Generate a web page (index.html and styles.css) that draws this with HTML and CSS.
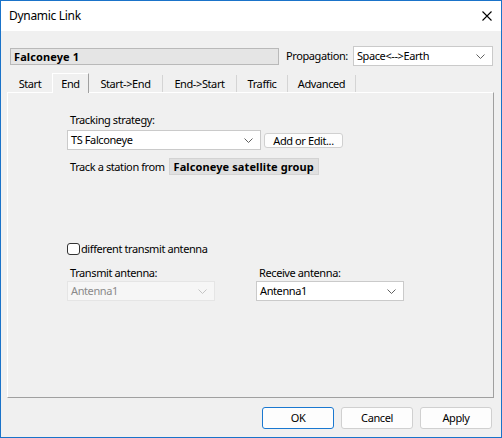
FILE: index.html
```html
<!DOCTYPE html>
<html>
<head>
<meta charset="utf-8">
<link rel="stylesheet" href="styles.css">
</head>
<body>
<div class="window">
  <div class="titlebar">
    <span class="title">Dynamic Link</span>
    <svg class="close" width="10" height="10" viewBox="0 0 10 10"><path d="M0.5 0.5 L9.5 9.5 M9.5 0.5 L0.5 9.5" stroke="#000" stroke-width="1.1" fill="none"/></svg>
  </div>
  <div class="content">
    <div class="header">
      <div class="namefield">Falconeye 1</div>
      <span class="proplabel">Propagation:</span>
      <div class="combo prop">
        <span>Space&lt;--&gt;Earth</span>
        <svg class="chev" width="9" height="5" viewBox="0 0 9 5"><polyline points="0.5,0.5 4.5,4.5 8.5,0.5" stroke="#606060" fill="none"/></svg>
      </div>
    </div>
    <div class="tabs">
      <div class="tab t-start">Start</div>
      <div class="tab sel t-end">End</div>
      <div class="tab t-se">Start-&gt;End</div>
      <div class="tab t-es">End-&gt;Start</div>
      <div class="tab t-tr">Traffic</div>
      <div class="tab t-adv">Advanced</div>
    </div>
    <div class="panel">
      <div class="label ts-label">Tracking strategy:</div>
      <div class="row">
        <div class="combo ts">
          <span>TS Falconeye</span>
          <svg class="chev" width="9" height="5" viewBox="0 0 9 5"><polyline points="0.5,0.5 4.5,4.5 8.5,0.5" stroke="#606060" fill="none"/></svg>
        </div>
        <div class="btn addedit">Add or Edit...</div>
      </div>
      <div class="trackrow">
        <span>Track a station from</span>
        <span class="group">Falconeye satellite group</span>
      </div>
      <label class="check"><span class="box"></span><span>different transmit antenna</span></label>
      <div class="antennas">
        <div class="col">
          <div class="label">Transmit antenna:</div>
          <div class="combo ant disabled">
            <span>Antenna1</span>
            <svg class="chev" width="9" height="5" viewBox="0 0 9 5"><polyline points="0.5,0.5 4.5,4.5 8.5,0.5" stroke="#c4c4c4" fill="none"/></svg>
          </div>
        </div>
        <div class="col">
          <div class="label">Receive antenna:</div>
          <div class="combo ant">
            <span>Antenna1</span>
            <svg class="chev" width="9" height="5" viewBox="0 0 9 5"><polyline points="0.5,0.5 4.5,4.5 8.5,0.5" stroke="#606060" fill="none"/></svg>
          </div>
        </div>
      </div>
    </div>
    <div class="buttons">
      <div class="btn dlg default">OK</div>
      <div class="btn dlg">Cancel</div>
      <div class="btn dlg">Apply</div>
    </div>
  </div>
</div>
</body>
</html>
```
FILE: styles.css
```css
* { box-sizing: border-box; }
html, body { margin: 0; padding: 0; }
body {
  font-family: "Noto Sans", "Liberation Sans", sans-serif;
  font-size: 11px;
  letter-spacing: -0.4px;
  line-height: 16px;
  color: #000;
  background: #fff;
}
.window {
  width: 502px;
  height: 438px;
  border: 1px solid #1a73c9;
  display: flex;
  flex-direction: column;
  background: #f0f0f0;
}
.titlebar {
  height: 30px;
  background: #fff;
  display: flex;
  align-items: center;
  justify-content: space-between;
  padding: 0 9px 0 8px;
  flex: none;
}
.title { font-size: 12px; letter-spacing: -0.3px; }
.content {
  flex: 1;
  display: flex;
  flex-direction: column;
  padding: 0 7px 0 6px;
}
.header {
  display: flex;
  align-items: center;
  margin-top: 15px;
  height: 20px;
}
.namefield {
  margin-left: 3px;
  width: 269px;
  height: 17px;
  background: #e5e5e5;
  border: 1px solid #b9b9b9;
  font-weight: bold;
  letter-spacing: 0.1px;
  line-height: 15px;
  padding-left: 3px;
}
.proplabel { margin-left: 7px; }
.combo {
  background: #fff;
  border: 1px solid #cacaca;
  display: flex;
  align-items: center;
  justify-content: space-between;
  padding: 0 7px 0 3px;
  height: 20px;
}
.prop { margin-left: 5px; width: 140px; }
.tabs {
  display: flex;
  align-items: flex-end;
  margin-top: 7px;
  height: 19px;
  padding-left: 1px;
  position: relative;
  z-index: 1;
}
.tab {
  height: 17px;
  line-height: 17px;
  text-align: center;
  border-right: 1px solid #d4d4d4;
}
.t-start { width: 44px; border-right: none; }
.t-end { width: 37px; }
.t-se { width: 74px; }
.t-es { width: 74px; }
.t-tr { width: 51px; }
.t-adv { width: 68px; }
.tab.sel {
  height: 20px;
  line-height: 20px;
  background: #f0f0f0;
  border-top: 1px solid #fff;
  border-left: 1px solid #fff;
  border-right: 1px solid #a0a0a0;
  margin-bottom: -1px;
}
.panel {
  height: 306px;
  border-top: 1px solid #fff;
  border-left: 1px solid #fff;
  border-right: 1px solid #a0a0a0;
  border-bottom: 1px solid #a0a0a0;
  padding: 19px 0 0 59px;
  display: flex;
  flex-direction: column;
  align-items: flex-start;
}
.label { padding-left: 3px; line-height: 16px; height: 16px; }
.row { display: flex; align-items: center; margin-top: 2px; }
.ts { width: 194px; }
.btn {
  background: #fdfdfd;
  border: 1px solid #d0d0d0;
  border-radius: 3px;
  text-align: center;
}
.addedit {
  margin-left: 3px;
  width: 79px;
  height: 15px;
  line-height: 13px;
}
.trackrow {
  display: flex;
  align-items: center;
  margin-top: 8px;
  padding-left: 3px;
  height: 17px;
}
.group {
  margin-left: 4px;
  width: 150px;
  text-align: center;
  background: #e0e0e0;
  border: 1px solid #d3d3d3;
  font-weight: bold;
  letter-spacing: 0.1px;
  height: 17px;
  line-height: 15px;
}
.check {
  display: flex;
  align-items: center;
  margin-top: 66px;
  height: 16px;
}
.box {
  width: 13px;
  height: 12px;
  border: 1px solid #333;
  border-radius: 3px;
  background: #fff;
  margin-right: 1px;
}
.antennas {
  display: flex;
  margin-top: 8px;
}
.col { width: 189px; display: flex; flex-direction: column; }
.ant { width: 148px; }
.disabled { color: #8a8a8a; border-color: #e5e5e5; background: #f6f6f6; }
.buttons {
  display: flex;
  justify-content: flex-end;
  gap: 6px;
  margin-top: 9px;
  padding-right: 2px;
}
.dlg {
  width: 72px;
  height: 22px;
  line-height: 20px;
}
.dlg + .dlg { margin-left: 1px; }
.default { border-color: #1a78d0; }
```
